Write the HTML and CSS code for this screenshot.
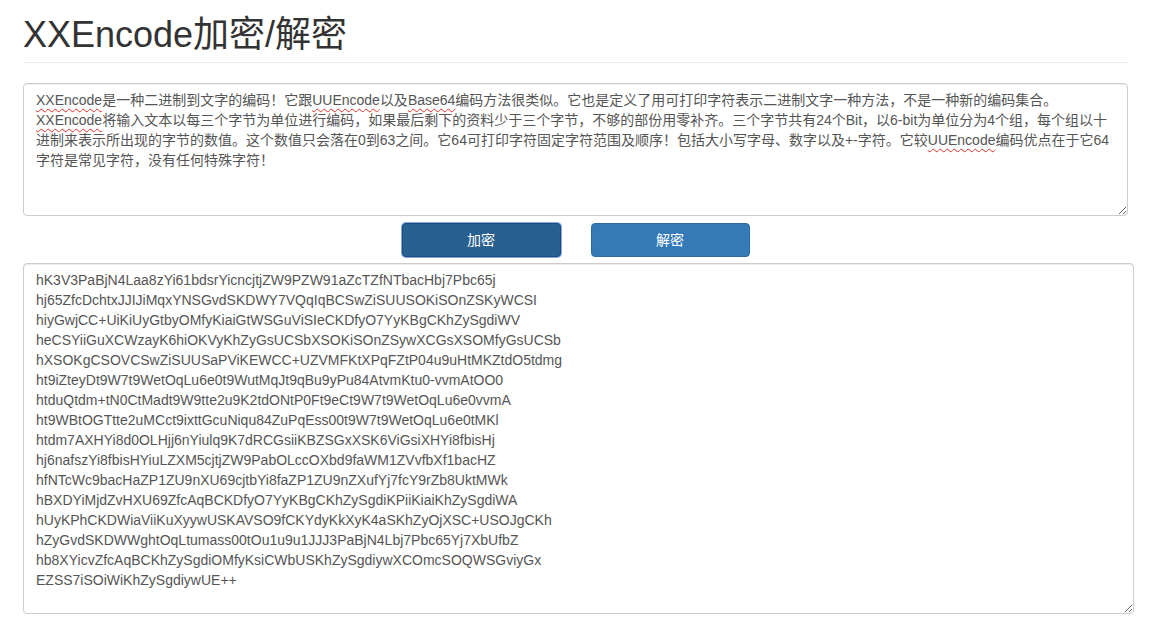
FILE: index.html
```html
<!DOCTYPE html>
<html lang="zh-CN">
<head>
<meta charset="utf-8">
<title>XXEncode加密/解密</title>
<link rel="stylesheet" href="styles.css">
</head>
<body>
<div class="container">
  <h1 class="page-title">XXEncode加密/解密</h1>
  <div class="input-box" contenteditable="true" spellcheck="false"><span class="sp">XXEncode</span>是一种二进制到文字的编码！它跟<span class="sp">UUEncode</span>以及<span class="sp">Base64</span>编码方法很类似。它也是定义了用可打印字符表示二进制文字一种方法，不是一种新的编码集合。<br><span class="sp">XXEncode</span>将输入文本以每三个字节为单位进行编码，如果最后剩下的资料少于三个字节，不够的部份用零补齐。三个字节共有24个Bit，以6-bit为单位分为4个组，每个组以十进制来表示所出现的字节的数值。这个数值只会落在0到63之间。它64可打印字符固定字符范围及顺序！包括大小写字母、数字以及+-字符。它较<span class="sp">UUEncode</span>编码优点在于它64字符是常见字符，没有任何特殊字符！</div>
  <div class="actions">
    <button class="btn btn-active" type="button">加密</button>
    <button class="btn" type="button">解密</button>
  </div>
  <textarea class="output-box" spellcheck="false">hK3V3PaBjN4Laa8zYi61bdsrYicncjtjZW9PZW91aZcTZfNTbacHbj7Pbc65j
hj65ZfcDchtxJJIJiMqxYNSGvdSKDWY7VQqIqBCSwZiSUUSOKiSOnZSKyWCSI
hiyGwjCC+UiKiUyGtbyOMfyKiaiGtWSGuViSIeCKDfyO7YyKBgCKhZySgdiWV
heCSYiiGuXCWzayK6hiOKVyKhZyGsUCSbXSOKiSOnZSywXCGsXSOMfyGsUCSb
hXSOKgCSOVCSwZiSUUSaPViKEWCC+UZVMFKtXPqFZtP04u9uHtMKZtdO5tdmg
ht9iZteyDt9W7t9WetOqLu6e0t9WutMqJt9qBu9yPu84AtvmKtu0-vvmAtOO0
htduQtdm+tN0CtMadt9W9tte2u9K2tdONtP0Ft9eCt9W7t9WetOqLu6e0vvmA
ht9WBtOGTtte2uMCct9ixttGcuNiqu84ZuPqEss00t9W7t9WetOqLu6e0tMKl
htdm7AXHYi8d0OLHjj6nYiulq9K7dRCGsiiKBZSGxXSK6ViGsiXHYi8fbisHj
hj6nafszYi8fbisHYiuLZXM5cjtjZW9PabOLccOXbd9faWM1ZVvfbXf1bacHZ
hfNTcWc9bacHaZP1ZU9nXU69cjtbYi8faZP1ZU9nZXufYj7fcY9rZb8UktMWk
hBXDYiMjdZvHXU69ZfcAqBCKDfyO7YyKBgCKhZySgdiKPiiKiaiKhZySgdiWA
hUyKPhCKDWiaViiKuXyywUSKAVSO9fCKYdyKkXyK4aSKhZyOjXSC+USOJgCKh
hZyGvdSKDWWghtOqLtumass00tOu1u9u1JJJ3PaBjN4Lbj7Pbc65Yj7XbUfbZ
hb8XYicvZfcAqBCKhZySgdiOMfyKsiCWbUSKhZySgdiywXCOmcSOQWSGviyGx
EZSS7iSOiWiKhZySgdiywUE++</textarea>
</div>
</body>
</html>
```

FILE: styles.css
```css
html, body {
  margin: 0;
  padding: 0;
  background: #fff;
}

body {
  margin: 8px;
  font-family: "Liberation Sans", "Noto Sans CJK SC", sans-serif;
  font-size: 14px;
  line-height: 20px;
  color: #333;
}

.container {
  padding: 0 15px;
}

.page-title {
  margin: 7px 0 20px;
  padding-bottom: 7px;
  border-bottom: 1px solid #eee;
  font-family: "Liberation Sans", "Noto Sans CJK SC", sans-serif;
  font-size: 36px;
  line-height: 40px;
  font-weight: 400;
  color: #333;
}

.input-box,
.output-box {
  display: block;
  box-sizing: border-box;
  margin: 0;
  padding: 6px 12px;
  border: 1px solid #ccc;
  border-radius: 4px;
  box-shadow: inset 0 1px 1px rgba(0, 0, 0, 0.075);
  background: #fff;
  font-family: "Liberation Sans", "Noto Sans CJK SC", sans-serif;
  font-size: 14px;
  line-height: 20px;
  color: #555;
  outline: none;
}

.input-box {
  width: 100%;
  height: 133px;
  overflow: auto;
  resize: vertical;
}

.sp {
  text-decoration: underline wavy #e0302a;
  text-decoration-thickness: 1px;
  text-underline-offset: 3px;
  text-decoration-skip-ink: none;
}

.actions {
  display: flex;
  justify-content: center;
  gap: 30px;
  margin: 7px 0 6px;
}

.btn {
  box-sizing: border-box;
  width: 159px;
  height: 34px;
  padding: 6px 12px;
  border: 1px solid #2e6da4;
  border-radius: 4px;
  background: #337ab7;
  color: #fff;
  font-family: "Liberation Sans", "Noto Sans CJK SC", sans-serif;
  font-size: 14px;
  line-height: 20px;
  cursor: pointer;
}

.btn-active {
  background: #286090;
  border-color: #204d74;
  box-shadow: 0 0 0 1px #7ea7e6;
}

.output-box {
  width: 1111px;
  height: 351px;
  resize: both;
  white-space: pre;
  overflow: hidden;
}
```
